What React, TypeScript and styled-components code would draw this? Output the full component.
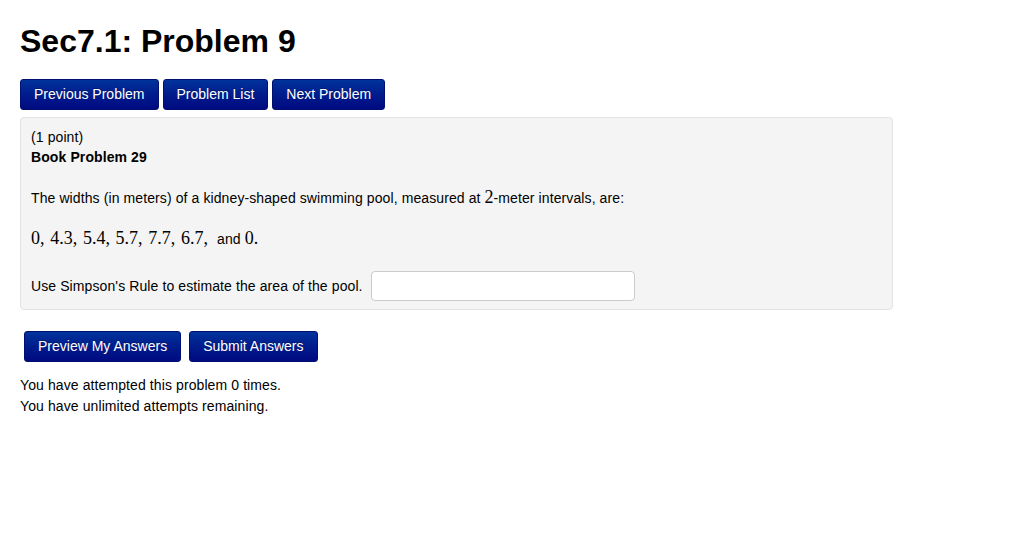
import React from "react";
import styled, { createGlobalStyle } from "styled-components";

const Global = createGlobalStyle`
  html, body { margin: 0; padding: 0; background: #fff; }
  body {
    font-family: "Liberation Sans", Arial, sans-serif;
    font-size: 14px;
    letter-spacing: 0.1px;
    color: #000;
  }
`;

const Page = styled.div`
  padding: 0 20px;
  width: 873px;
`;

const Title = styled.h1`
  margin: 23px 0 20px;
  font-size: 32px;
  line-height: 36px;
  font-weight: bold;
  letter-spacing: 0;
`;

const ButtonRow = styled.div<{ $indent?: number; $gap?: number }>`
  display: flex;
  gap: ${(p) => p.$gap ?? 4}px;
  padding-left: ${(p) => p.$indent ?? 0}px;
`;

const NavButton = styled.button`
  font-family: "Liberation Sans", Arial, sans-serif;
  font-size: 14px;
  letter-spacing: 0;
  line-height: 19px;
  padding: 5px 13px;
  color: #fff;
  border: 1px solid #00106e;
  border-radius: 3px;
  background: linear-gradient(to bottom, #00339c 0%, #001e8e 45%, #000a80 100%);
  cursor: pointer;
  text-shadow: 0 -1px 0 rgba(0, 0, 0, 0.25);
`;

const ProblemBox = styled.div`
  margin-top: 7px;
  background: #f4f4f4;
  border: 1px solid #e3e3e3;
  border-radius: 4px;
  padding: 9px 10px 8px;
  line-height: 20px;
`;

const Line = styled.div<{ $bold?: boolean; $gapTop?: number }>`
  font-weight: ${(p) => (p.$bold ? "bold" : "normal")};
  margin-top: ${(p) => p.$gapTop ?? 0}px;
`;

const MathText = styled.span<{ $after?: number }>`
  font-family: "Liberation Serif", "Times New Roman", serif;
  font-size: 18px;
  letter-spacing: 0;
  word-spacing: 1.2px;
  margin-right: ${(p) => p.$after ?? 0}px;
`;

const AnswerRow = styled.div`
  display: flex;
  align-items: center;
  margin-top: 22px;
  gap: 8px;
`;

const AnswerInput = styled.input`
  width: 264px;
  height: 30px;
  box-sizing: border-box;
  border: 1px solid #cccccc;
  border-radius: 4px;
  background: #fff;
  font-size: 14px;
  padding: 4px 6px;
`;

const SubmitArea = styled.div`
  margin-top: 21px;
`;

const Status = styled.div`
  margin-top: 13px;
  line-height: 21px;
`;

export default function App() {
  return (
    <>
      <Global />
      <Page>
        <Title>Sec7.1: Problem 9</Title>
        <ButtonRow>
          <NavButton>Previous Problem</NavButton>
          <NavButton>Problem List</NavButton>
          <NavButton>Next Problem</NavButton>
        </ButtonRow>
        <ProblemBox>
          <Line>(1 point)</Line>
          <Line $bold>Book Problem 29</Line>
          <Line $gapTop={20}>
            The widths (in meters) of a kidney-shaped swimming pool, measured at{" "}
            <MathText>2</MathText>-meter intervals, are:
          </Line>
          <Line $gapTop={20}>
            <MathText $after={5}>0, 4.3, 5.4, 5.7, 7.7, 6.7,</MathText> and <MathText>0.</MathText>
          </Line>
          <AnswerRow>
            <span>Use Simpson's Rule to estimate the area of the pool.</span>
            <AnswerInput type="text" />
          </AnswerRow>
        </ProblemBox>
        <SubmitArea>
          <ButtonRow $indent={4} $gap={8}>
            <NavButton>Preview My Answers</NavButton>
            <NavButton>Submit Answers</NavButton>
          </ButtonRow>
        </SubmitArea>
        <Status>
          You have attempted this problem 0 times.
          <br />
          You have unlimited attempts remaining.
        </Status>
      </Page>
    </>
  );
}
